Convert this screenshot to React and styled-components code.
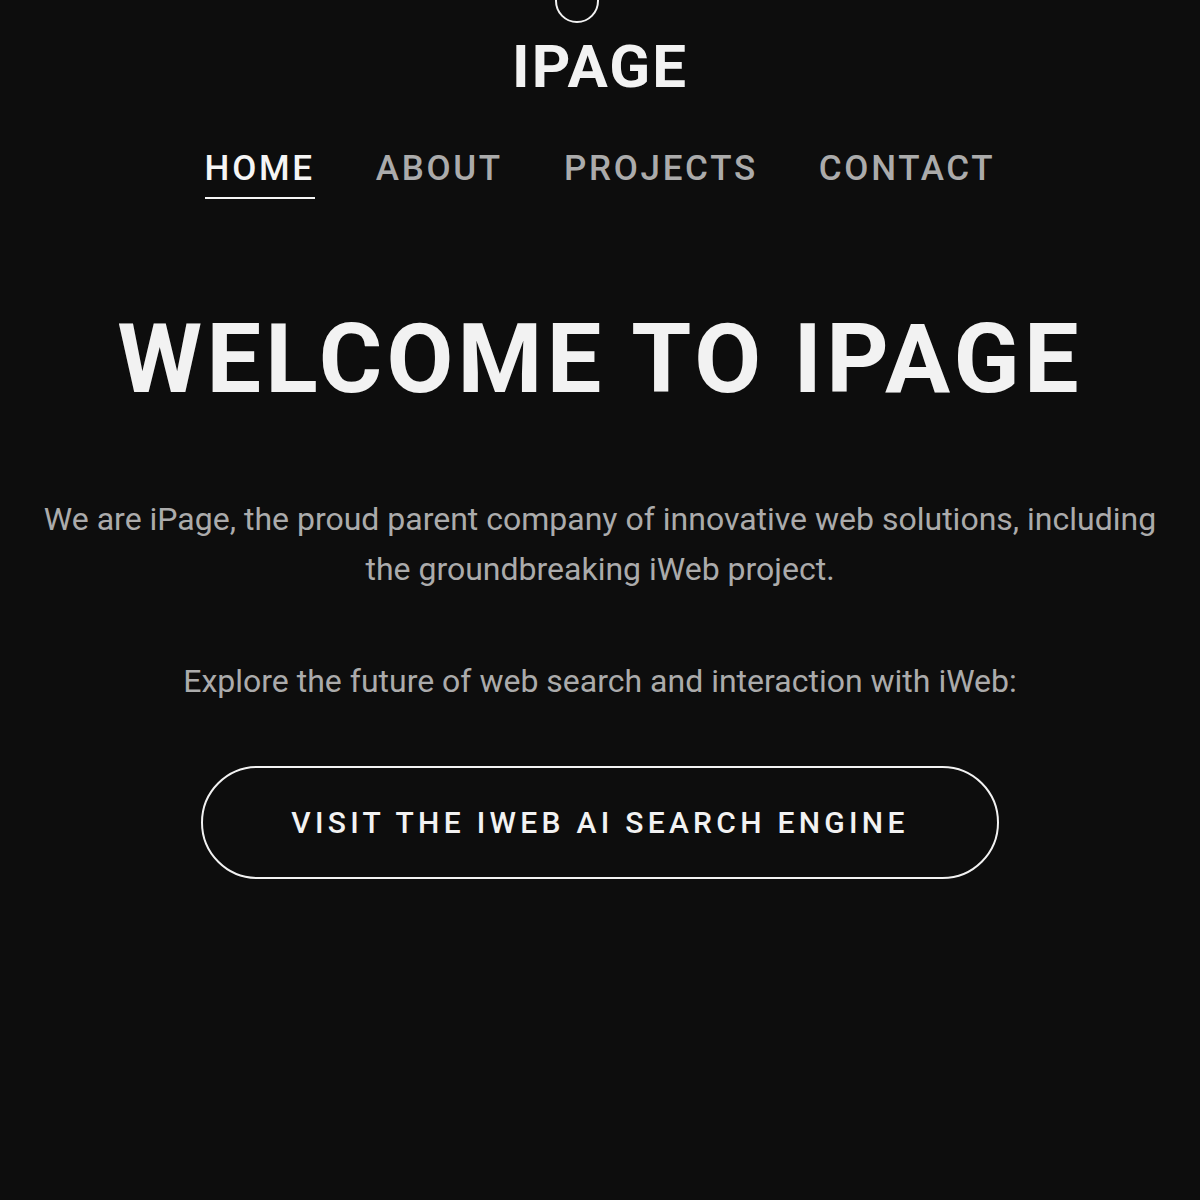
import React from 'react';
import styled, { createGlobalStyle } from 'styled-components';

const GlobalStyle = createGlobalStyle`
    html, body {
        margin: 0;
        padding: 0;
        background: #0d0d0d;
    }
    body {
        font-family: Roboto, "Liberation Sans", Arial, sans-serif;
        color: #f2f2f2;
    }
`

function App() {
    const links = ['Home', 'About', 'Projects', 'Contact'];
    return (
        <Page>
            <GlobalStyle />
            <Header>
                <Logo />
                <Brand>IPAGE</Brand>
                <Nav>
                    {links.map((l, i) => (
                        <NavLink key={l} active={i === 0}>{l}</NavLink>
                    ))}
                </Nav>
            </Header>
            <Hero>
                <Title>Welcome to iPage</Title>
                <Lead>
                    We are iPage, the proud parent company of innovative web solutions, including the groundbreaking iWeb project.
                </Lead>
                <Lead>Explore the future of web search and interaction with iWeb:</Lead>
                <CtaButton href="#">Visit the iWeb AI Search Engine</CtaButton>
            </Hero>
        </Page>
    )
}

export default App;

const Page = styled.div`
    min-height: 1200px;
    background: #0d0d0d;
    display: flex;
    flex-direction: column;
    align-items: center;
`

const Header = styled.header`
    display: flex;
    flex-direction: column;
    align-items: center;
`

const Logo = styled.div`
    width: 40px;
    height: 40px;
    border: 2px solid #f2f2f2;
    border-radius: 50%;
    margin-top: -21px;
    margin-right: 46px;
`

const Brand = styled.h1`
    margin: 9px 0 0;
    font-size: 60px;
    line-height: 70px;
    font-weight: 700;
    letter-spacing: 2px;
    color: #f2f2f2;
`

const Nav = styled.nav`
    display: flex;
    gap: 61px;
    margin-top: 47px;
`

const NavLink = styled.a`
    font-size: 35px;
    line-height: 40px;
    font-weight: 500;
    letter-spacing: 2.7px;
    text-transform: uppercase;
    color: ${props => props.active ? '#f5f5f5' : '#ababab'};
    padding-bottom: 8px;
    border-bottom: 2px solid ${props => props.active ? '#f5f5f5' : 'transparent'};
    text-decoration: none;
`

const Hero = styled.main`
    display: flex;
    flex-direction: column;
    align-items: center;
    text-align: center;
    padding: 0 40px;
    margin-top: 105px;
`

const Title = styled.h2`
    margin: 0;
    font-size: 97px;
    line-height: 110px;
    font-weight: 700;
    letter-spacing: 4.2px;
    text-transform: uppercase;
    color: #f2f2f2;
`

const Lead = styled.p`
    margin: 0;
    font-size: 32px;
    line-height: 50px;
    color: #ababab;
    &:first-of-type {
        margin-top: 80px;
    }
    & + & {
        margin-top: 62px;
    }
`

const CtaButton = styled.a`
    margin-top: 60px;
    width: 798px;
    height: 113px;
    box-sizing: border-box;
    border: 2px solid #f2f2f2;
    border-radius: 57px;
    display: flex;
    justify-content: center;
    align-items: center;
    font-size: 30px;
    font-weight: 500;
    letter-spacing: 4.3px;
    text-transform: uppercase;
    color: #f2f2f2;
    text-decoration: none;
`
